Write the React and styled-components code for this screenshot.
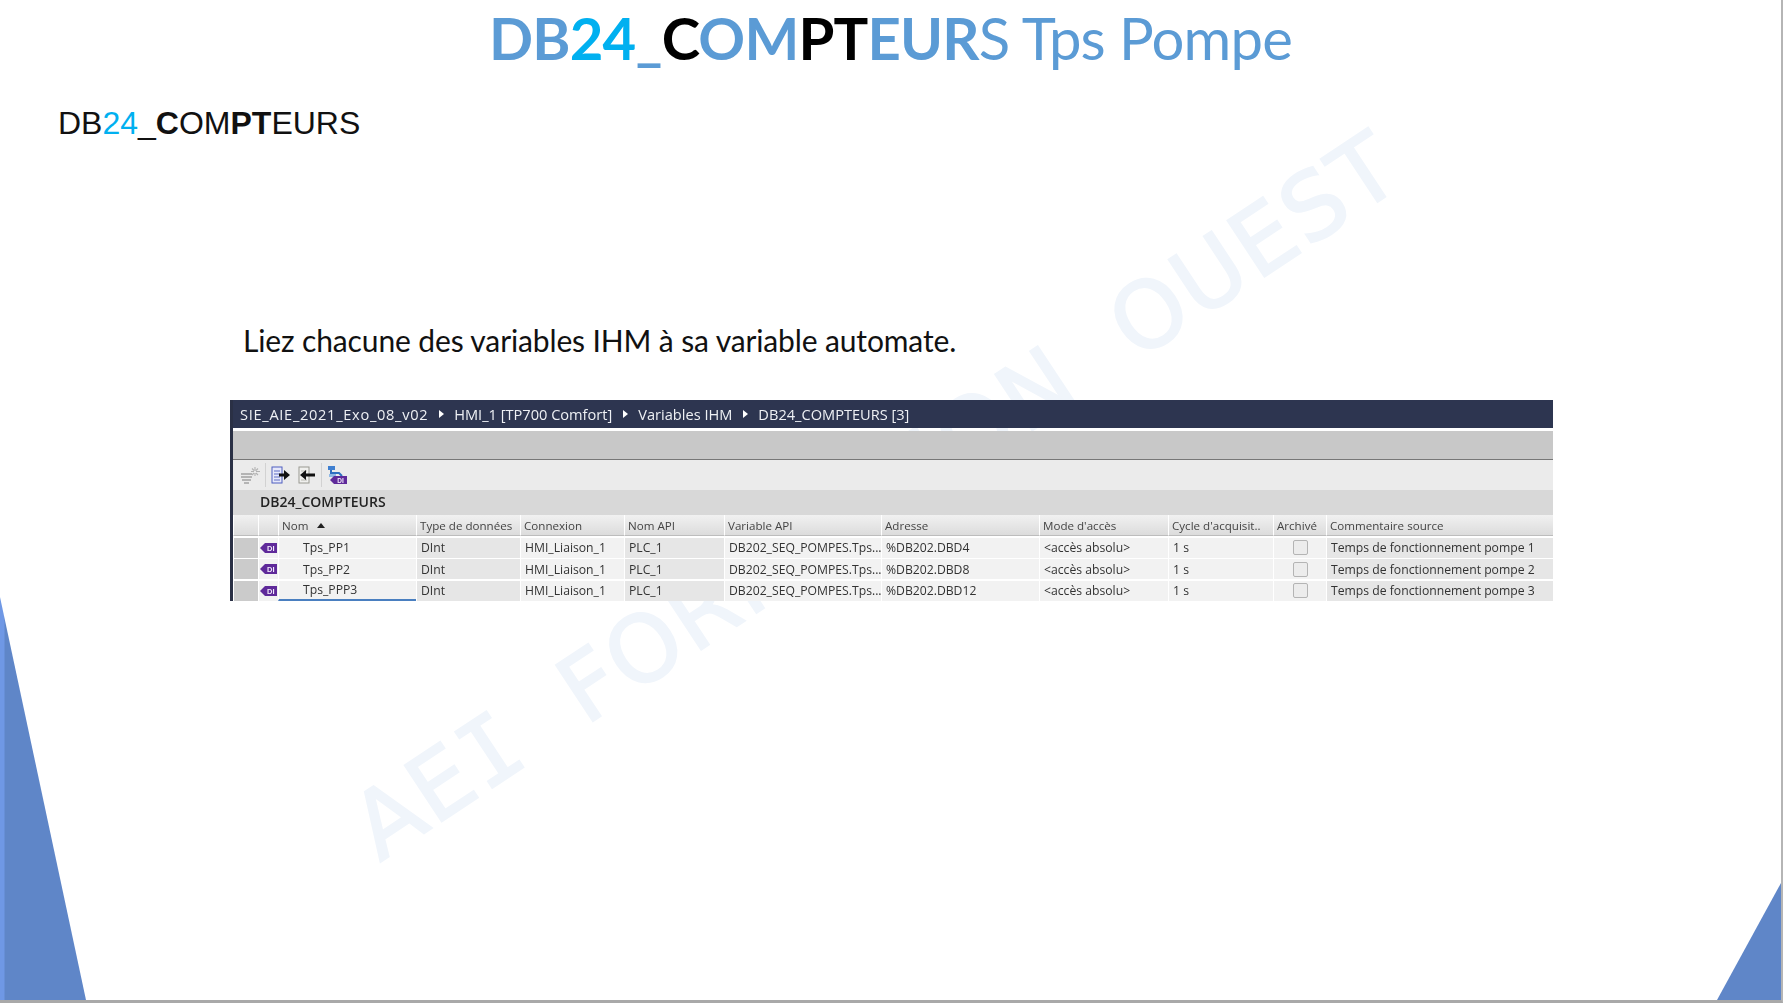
import React from "react";
import styled, { createGlobalStyle } from "styled-components";

const rows = [
  { name: "Tps_PP1", addr: "%DB202.DBD4", comment: "Temps de fonctionnement pompe 1" },
  { name: "Tps_PP2", addr: "%DB202.DBD8", comment: "Temps de fonctionnement pompe 2" },
  { name: "Tps_PPP3", addr: "%DB202.DBD12", comment: "Temps de fonctionnement pompe 3" },
];

const headers = [
  "Type de données",
  "Connexion",
  "Nom API",
  "Variable API",
  "Adresse",
  "Mode d'accès",
  "Cycle d'acquisit..",
  "Archivé",
  "Commentaire source",
];

const crumbs = [
  "SIE_AIE_2021_Exo_08_v02",
  "HMI_1 [TP700 Comfort]",
  "Variables IHM",
  "DB24_COMPTEURS [3]",
];

function TagIcon() {
  return (
    <svg width="17" height="12" viewBox="0 0 17 12">
      <path d="M0 6 L5 1 H17 V11 H5 Z" fill="#5f2a9a" />
      <text x="10.8" y="8.6" fontSize="7.5" fontWeight="700" textAnchor="middle" fontFamily="Liberation Sans, sans-serif" fill="#f1e9fa">DI</text>
    </svg>
  );
}

function CompileIcon() {
  return (
    <svg width="20" height="18" viewBox="0 0 20 18">
      <path d="M1 8h11M1 11h11M2 14h9M4 17h5" stroke="#a3a3a3" strokeWidth="1.7" />
      <path d="M15 1v4M15 7v3M11 5.500h3M16 5.500h4M12 2.500l2 2M18 2.500l-2 2M12 9l2-2M18 9l-2-2" stroke="#b2b2b2" strokeWidth="1.1" />
    </svg>
  );
}

function ExportIcon() {
  return (
    <svg width="19" height="18" viewBox="0 0 19 18">
      <rect x="1" y="1" width="10" height="16" fill="#e6e8fa" stroke="#4f5fc0" />
      <path d="M3 5h6M3 8h6M3 11h6M3 14h6" stroke="#5f6cc4" />
      <path d="M8 7.500h5V4l6 5-6 5v-3.500H8z" fill="#111" />
    </svg>
  );
}

function ImportIcon() {
  return (
    <svg width="19" height="18" viewBox="0 0 19 18">
      <rect x="2" y="1" width="10" height="16" fill="#f0f0ee" stroke="#9a9a92" />
      <path d="M4 5h6M4 14h6" stroke="#b8b8b0" />
      <path d="M18 7.500H9V4L3 9l6 5v-3.500h9z" fill="#111" />
    </svg>
  );
}

function LinkIcon() {
  return (
    <svg width="20" height="18" viewBox="0 0 20 18">
      <path d="M1 0h7v4H1z" fill="#3f7fd0" />
      <path d="M4 4v3h8l3 3" fill="none" stroke="#2f6fc0" strokeWidth="2" />
      <path d="M2 8h7v3H2z" fill="#8fb8e6" />
      <path d="M3 14 L7 10 H20 V18 H7 Z" fill="#5f2a9a" />
      <text x="13.500" y="16.500" fontSize="6.500" fontWeight="700" textAnchor="middle" fontFamily="Liberation Sans, sans-serif" fill="#f1e9fa">DI</text>
    </svg>
  );
}

export default function App() {
  return (
    <>
      <GlobalStyle />
      <Page>
        <Watermark>
          AE<BarredI>I</BarredI>{"  "}FORMAT<BarredI>I</BarredI>ON{"  "}OUEST
        </Watermark>
        <LeftWedge />
        <RightWedge />

        <Title>
          <b>DB</b>
          <Cyan><b>24</b></Cyan>
          <b>_</b>
          <Dark><b>C</b></Dark>
          <b>OM</b>
          <Dark><b>PT</b></Dark>
          <b>EUR</b>S Tps Pompe
        </Title>

        <Subtitle>
          DB<Cyan>24</Cyan>_<b>C</b>OM<b>PT</b>EURS
        </Subtitle>

        <Instruction>Liez chacune des variables IHM à sa variable automate.</Instruction>

        <Editor>
          <Breadcrumb>
            {crumbs.map((c, i) => (
              <React.Fragment key={c}>
                {i > 0 && <Caret />}
                <Crumb $wide={i === 0}>{c}</Crumb>
              </React.Fragment>
            ))}
          </Breadcrumb>
          <GreyBar />
          <Toolbar>
            <CompileIcon />
            <ToolSep />
            <ExportIcon />
            <ImportIcon />
            <ToolSep />
            <LinkIcon />
          </Toolbar>
          <GroupTitle>DB24_COMPTEURS</GroupTitle>
          <Grid>
            <HeadCell />
            <HeadCell />
            <HeadCell>
              Nom <SortArrow />
            </HeadCell>
            {headers.map((h) => (
              <HeadCell key={h}>{h}</HeadCell>
            ))}
            {rows.map((r, i) => (
              <React.Fragment key={r.name}>
                <Cell $bg="#cbcbcb" />
                <IconCell><TagIcon /></IconCell>
                <Cell $indent $focus={i === 2}>{r.name}</Cell>
                <Cell $bg="#e6e6e6">DInt</Cell>
                <Cell>HMI_Liaison_1</Cell>
                <Cell $bg="#e6e6e6">PLC_1</Cell>
                <Cell>DB202_SEQ_POMPES.Tps...</Cell>
                <Cell>{r.addr}</Cell>
                <Cell>&lt;accès absolu&gt;</Cell>
                <Cell>1 s</Cell>
                <IconCell><Check /></IconCell>
                <Cell $bg="#e6e6e6">{r.comment}</Cell>
              </React.Fragment>
            ))}
          </Grid>
        </Editor>
      </Page>
    </>
  );
}

const GlobalStyle = createGlobalStyle`
  html, body {
    margin: 0;
    padding: 0;
    background: #fff;
  }
`;

const Page = styled.div`
  position: relative;
  box-sizing: border-box;
  width: 1783px;
  height: 1003px;
  overflow: hidden;
  background: #fff;
  border-right: 2px solid #b5b5b5;
  border-bottom: 3px solid #a9a9a9;
`;

const Watermark = styled.div`
  position: absolute;
  left: 876px;
  top: 496px;
  transform: translate(-50%, -50%) rotate(-33.5deg);
  font-family: "DejaVu Sans", sans-serif;
  font-size: 92px;
  letter-spacing: 2.3px;
  white-space: pre;
  color: #f0f5fb;
  -webkit-text-stroke: 2px #f0f5fb;
`;

const BarredI = styled.span`
  font-family: "DejaVu Sans Mono", monospace;
`;

const LeftWedge = styled.div`
  position: absolute;
  left: 0;
  bottom: 0;
  width: 86px;
  height: 403px;
  background: linear-gradient(90deg, #6f98e5 0, #6f98e5 4px, #5f86c8 5px);
  clip-path: polygon(0 0, 100% 100%, 0 100%);
`;

const RightWedge = styled.div`
  position: absolute;
  right: 0;
  bottom: 0;
  width: 64px;
  height: 117px;
  background: #5f86c8;
  clip-path: polygon(100% 0, 100% 100%, 0 100%);
`;

const Title = styled.h1`
  position: relative;
  margin: 0;
  padding-top: 2px;
  text-align: center;
  font-family: Lato, sans-serif;
  font-size: 58px;
  line-height: 72px;
  font-weight: 400;
  letter-spacing: -0.8px;
  color: #5b9bd5;
`;

const Cyan = styled.span`
  color: #00b0f0;
`;

const Dark = styled.span`
  color: #000;
`;

const Subtitle = styled.h2`
  position: relative;
  margin: 31px 0 0 58px;
  font-family: "Liberation Sans", Arial, sans-serif;
  font-size: 32px;
  line-height: 37px;
  font-weight: 400;
  color: #111;
`;

const Instruction = styled.p`
  position: relative;
  margin: 178px 0 0 243px;
  font-family: Lato, sans-serif;
  font-size: 30px;
  line-height: 40px;
  letter-spacing: -0.13px;
  color: #111;
`;

const Editor = styled.div`
  position: relative;
  box-sizing: border-box;
  width: 1323px;
  margin: 40px 0 0 230px;
  border-left: 3px solid #2a3045;
  font-family: "Open Sans", sans-serif;
  font-size: 12.2px;
  color: #333;
  filter: blur(0.3px);
`;

const Breadcrumb = styled.div`
  display: flex;
  align-items: center;
  gap: 10.5px;
  height: 28px;
  padding-left: 7px;
  background: #2d3550;
  color: #eef0f4;
  font-size: 14.6px;
  white-space: nowrap;
`;

const Crumb = styled.span`
  letter-spacing: ${(p) => (p.$wide ? "0.7px" : "0")};
`;

const Caret = styled.i`
  width: 0;
  height: 0;
  border-left: 5px solid #fff;
  border-top: 4px solid transparent;
  border-bottom: 4px solid transparent;
`;

const GreyBar = styled.div`
  height: 28px;
  margin-top: 3px;
  background: #c8c8c8;
  border-bottom: 1px solid #777;
`;

const Toolbar = styled.div`
  display: flex;
  align-items: center;
  gap: 5px;
  height: 30px;
  padding-left: 7px;
  background: #ebebeb;

  svg + svg {
    margin-left: 2px;
  }
`;

const ToolSep = styled.i`
  width: 1px;
  height: 24px;
  background: #d2d2d2;
`;

const GroupTitle = styled.div`
  display: flex;
  align-items: center;
  height: 25px;
  padding: 0 0 2px 27px;
  box-sizing: border-box;
  background: #d8d8d8;
  color: #222;
  font-size: 14px;
  font-weight: 600;
`;

const Grid = styled.div`
  display: grid;
  grid-template-columns: 25px 20px 138px 104px 104px 100px 157px 158px 129px 105px 53px 227px;
  grid-template-rows: 21px repeat(3, 20px);
  row-gap: 1.5px;
  background: #fff;
`;

const HeadCell = styled.div`
  display: flex;
  align-items: center;
  gap: 9px;
  box-sizing: border-box;
  padding-left: 3px;
  background: linear-gradient(#f1f1f1, #dcdcdc);
  border-left: 1px solid #fff;
  border-bottom: 1px solid #bdbdbd;
  font-size: 11.6px;
  color: #444;
  white-space: nowrap;
  overflow: hidden;
`;

const SortArrow = styled.i`
  width: 0;
  height: 0;
  border-left: 4px solid transparent;
  border-right: 4px solid transparent;
  border-bottom: 5px solid #222;
`;

const Cell = styled.div`
  display: flex;
  align-items: center;
  box-sizing: border-box;
  padding-left: ${(p) => (p.$indent ? "24px" : "4px")};
  background: ${(p) => p.$bg || "#f2f2f2"};
  border-left: 1px solid #fff;
  border-bottom: ${(p) => (p.$focus ? "2px solid #4a7fc0" : "none")};
  white-space: nowrap;
  overflow: hidden;
`;

const IconCell = styled(Cell)`
  justify-content: center;
  padding-left: 0;
`;

const Check = styled.i`
  box-sizing: border-box;
  width: 15px;
  height: 15px;
  background: #ececec;
  border: 1px solid #b4b4b4;
  border-radius: 2px;
`;
